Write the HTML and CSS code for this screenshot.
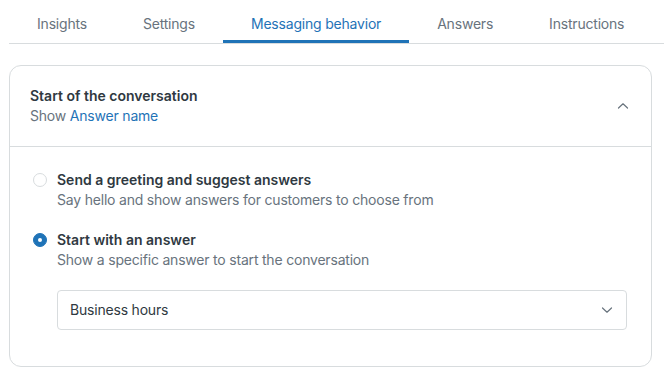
FILE: index.html
```html
<!DOCTYPE html>
<html lang="en">
<head>
    <meta charset="UTF-8">
    <meta name="viewport" content="width=device-width, initial-scale=1.0">
    <title>Messaging behavior</title>
    <link rel="stylesheet" href="styles.css">
</head>
<body>
    <div class="page">
        <nav class="tabs">
            <a class="tab">Insights</a>
            <a class="tab">Settings</a>
            <a class="tab active">Messaging behavior</a>
            <a class="tab">Answers</a>
            <a class="tab">Instructions</a>
        </nav>

        <section class="card">
            <div class="card-header">
                <div>
                    <div class="card-title">Start of the conversation</div>
                    <div class="card-sub">Show <span class="link">Answer name</span></div>
                </div>
                <svg class="chevron" width="12" height="12" viewBox="0 0 12 12">
                    <path d="M1.5 8 L6 3.8 L10.5 8" fill="none" stroke="#68737d" stroke-width="1.2" stroke-linecap="round" stroke-linejoin="round"/>
                </svg>
            </div>

            <div class="card-body">
                <label class="option">
                    <span class="radio"></span>
                    <span>
                        <span class="option-title">Send a greeting and suggest answers</span>
                        <span class="option-desc">Say hello and show answers for customers to choose from</span>
                    </span>
                </label>

                <label class="option">
                    <span class="radio checked"></span>
                    <span>
                        <span class="option-title">Start with an answer</span>
                        <span class="option-desc">Show a specific answer to start the conversation</span>
                    </span>
                </label>

                <div class="select">
                    <span>Business hours</span>
                    <svg width="12" height="12" viewBox="0 0 12 12">
                        <path d="M1.5 4 L6 8.2 L10.5 4" fill="none" stroke="#68737d" stroke-width="1.2" stroke-linecap="round" stroke-linejoin="round"/>
                    </svg>
                </div>
            </div>
        </section>
    </div>
</body>
</html>
```

FILE: styles.css
```css
body {
    margin: 0;
    font-family: Inter, "Noto Sans", sans-serif;
    font-size: 14px;
    line-height: 20px;
    letter-spacing: -0.2px;
    color: #2f3941;
    background: #fff;
}
.page {
    padding-left: 9px;
}
.tabs {
    display: flex;
    border-bottom: 1px solid #d8dcde;
}
.tab {
    padding: 14px 28px 6px;
    border-bottom: 3px solid transparent;
    color: #68737d;
}
.tab.active {
    color: #1f73b7;
    border-bottom-color: #1f73b7;
}
.card {
    margin: 21px 12px 0 0;
    border: 1px solid #d8dcde;
    border-radius: 12px;
}
.card-header {
    display: flex;
    align-items: center;
    justify-content: space-between;
    padding: 20px 22px 20px 20px;
    border-bottom: 1px solid #d8dcde;
}
.card-title {
    font-weight: 600;
    letter-spacing: 0;
}
.card-sub {
    color: #68737d;
}
.link {
    color: #1f73b7;
}
.card-body {
    padding: 23px 24px 36px 23px;
}
.option {
    display: flex;
    gap: 10px;
    margin-bottom: 20px;
}
.option-title {
    display: block;
    font-weight: 600;
    letter-spacing: 0;
}
.option-desc {
    display: block;
    color: #68737d;
}
.radio {
    flex: none;
    width: 14px;
    height: 14px;
    margin-top: 3px;
    border: 1px solid #d8dcde;
    border-radius: 50%;
    box-sizing: border-box;
}
.radio.checked {
    background: #1f73b7;
    border-color: #1f73b7;
    position: relative;
}
.radio.checked::after {
    content: "";
    position: absolute;
    left: 4px;
    top: 4px;
    width: 4px;
    height: 4px;
    border-radius: 50%;
    background: #fff;
}
.select {
    display: flex;
    align-items: center;
    justify-content: space-between;
    margin-left: 24px;
    height: 40px;
    box-sizing: border-box;
    padding: 0 13px 0 12px;
    border: 1px solid #d8dcde;
    border-radius: 4px;
}
```
